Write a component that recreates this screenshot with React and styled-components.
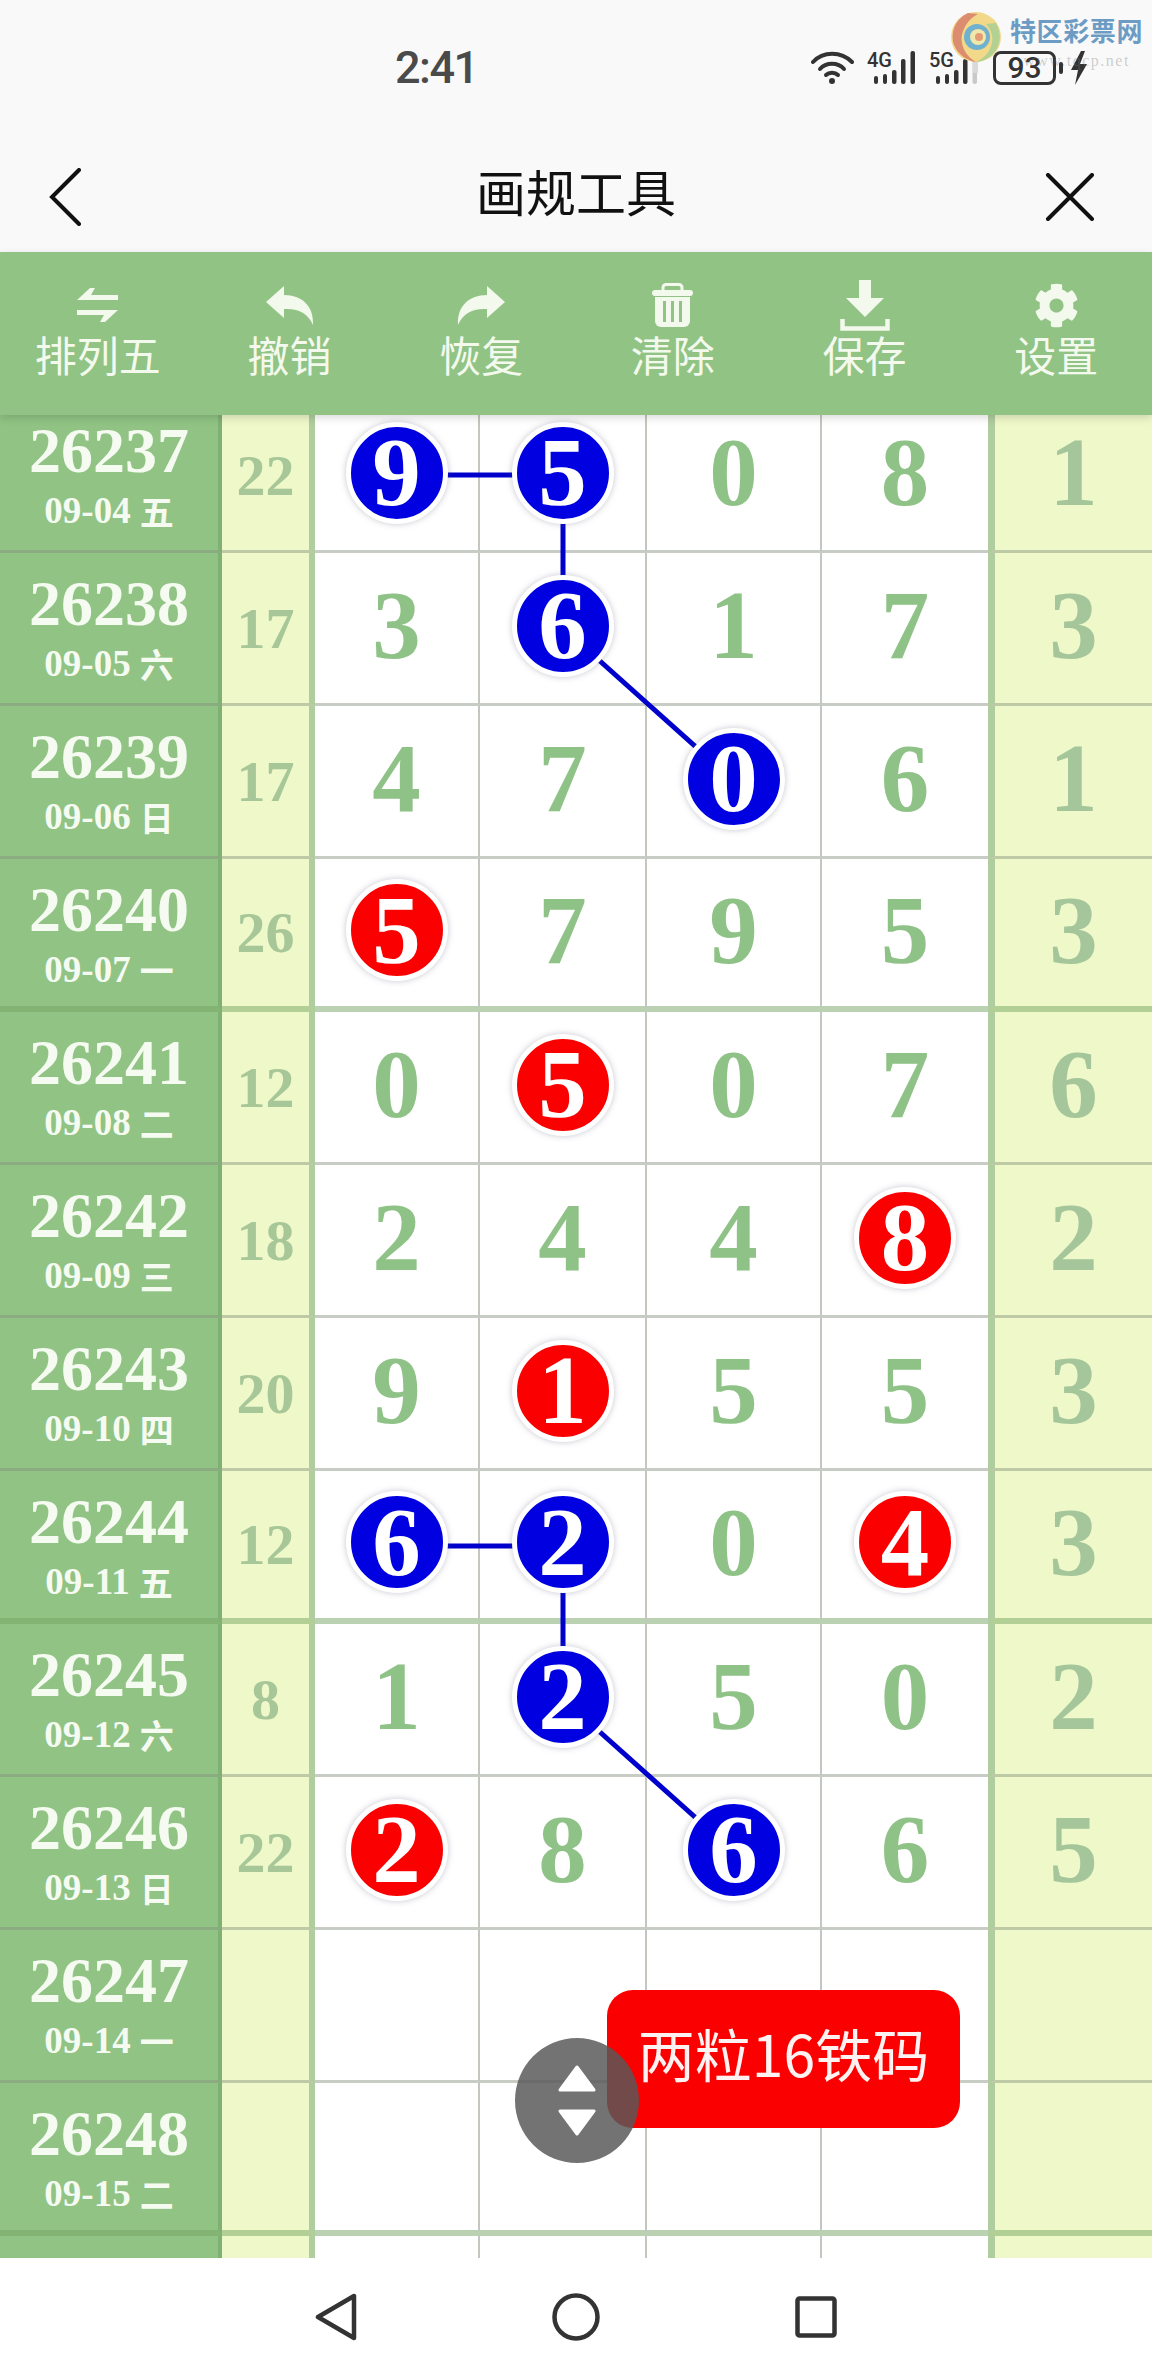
import React from 'react'
import styled, { createGlobalStyle } from 'styled-components'
import { FaCog } from 'react-icons/fa'

const GlobalStyle = createGlobalStyle`
  html, body {
    margin: 0;
    padding: 0;
    background: #ffffff;
  }
  * {
    box-sizing: border-box;
  }
`

const COLUMNS = [222, 93, 165, 167, 175, 166, 164]
const ROW_H = 153
const CJK = `"Noto Sans CJK SC", "Noto Sans", sans-serif`
const SERIF = `"Liberation Serif", "Noto Sans CJK SC", serif`

const Page = styled.div`
  position: relative;
  width: 1152px;
  height: 2376px;
  overflow: hidden;
  display: flex;
  flex-direction: column;
  background: #ffffff;
  font-family: ${CJK};
`

const StatusBar = styled.div`
  height: 100px;
  padding: 50px 64px 0 395px;
  display: flex;
  justify-content: space-between;
  align-items: flex-start;
  background: #f9f9f9;
`

const Time = styled.span`
  font-family: Roboto, sans-serif;
  font-size: 45px;
  font-weight: 500;
  line-height: 36px;
  color: #4a4a4a;
  letter-spacing: -1.5px;
`

const StatusIcons = styled.div`
  display: flex;
  align-items: center;
  height: 35px;
  gap: 13px;
`

const SignalSvg = styled.svg`
  display: block;
  overflow: visible;
`

const SignalLabel = styled.text`
  font-family: Roboto, sans-serif;
  font-size: 20px;
  font-weight: 500;
  fill: #333333;
`

const Battery = styled.div`
  width: 63px;
  height: 34px;
  margin-left: 2px;
  border: 3px solid #333333;
  border-radius: 8px;
  display: flex;
  align-items: center;
  justify-content: center;
  font-family: Roboto, sans-serif;
  font-size: 30px;
  font-weight: 500;
  color: #333333;
`

const BatteryEnd = styled.div`
  display: flex;
  align-items: center;
  gap: 7px;
  margin-left: -10px;
`

const Nub = styled.span`
  width: 4px;
  height: 12px;
  background: #333333;
  border-radius: 2px;
`

const Watermark = styled.div`
  position: absolute;
  top: 11px;
  left: 950px;
  display: flex;
  align-items: flex-start;
  gap: 8px;
`

const WatermarkText = styled.div`
  display: flex;
  flex-direction: column;
  align-items: center;
  margin-top: 4px;
`

const WatermarkName = styled.span`
  font-size: 26px;
  font-weight: 700;
  line-height: 30px;
  letter-spacing: 0.6px;
  color: #6c9cc4;
`

const WatermarkUrl = styled.span`
  font-family: "Liberation Serif", serif;
  font-size: 16px;
  line-height: 16px;
  margin-top: 8px;
  letter-spacing: 1.5px;
  color: rgba(120, 120, 120, 0.35);
`

const TitleBar = styled.div`
  height: 152px;
  padding: 28px 57px 0;
  display: grid;
  grid-template-columns: 1fr auto 1fr;
  align-items: center;
  background: #f9f9f9;
`

const Title = styled.h1`
  margin: 0;
  font-size: 50px;
  font-weight: 400;
  line-height: 60px;
  color: #111111;
`

const BackIcon = styled.svg`
  display: block;
  margin: 14px 0 0 -8px;
`

const CloseIcon = styled.svg`
  display: block;
  margin-top: 14px;
  justify-self: end;
`

const Toolbar = styled.div`
  position: relative;
  z-index: 5;
  height: 163px;
  padding: 27px 0 0 2px;
  display: flex;
  background: #90c384;
  box-shadow: 0 3px 8px rgba(0, 0, 0, 0.14);
`

const ToolItem = styled.div`
  flex: 1;
  display: flex;
  flex-direction: column;
  align-items: center;
  color: #f3f9ec;
`

const ToolIcon = styled.div`
  height: 52px;
  display: flex;
  align-items: center;
  justify-content: center;
`

const ToolLabel = styled.span`
  margin-top: -3px;
  font-size: 42px;
  line-height: 52px;
`

const BoardClip = styled.div`
  height: 1843px;
  overflow: hidden;
`

const Board = styled.div`
  position: relative;
  margin-top: -15px;
`

const Links = styled.svg`
  position: absolute;
  top: 0;
  left: 0;
  z-index: 1;
  pointer-events: none;
`

const Row = styled.div`
  display: grid;
  grid-template-columns: ${COLUMNS.map((c) => `${c}px`).join(' ')};
  height: ${ROW_H}px;
`

const Cell = styled.div`
  position: relative;
  display: flex;
  align-items: center;
  justify-content: center;
  padding-bottom: 5px;
  border-bottom: ${(p) => (p.$thick ? '6px solid rgba(118, 166, 100, 0.5)' : '3px solid rgba(130, 145, 125, 0.45)')};
`

const DrawCell = styled(Cell)`
  flex-direction: column;
  justify-content: flex-start;
  padding: 24px 0 0;
  background: #90c384;
  border-right: 4px solid #80b174;
  color: #f6fbf2;
  font-family: ${SERIF};
  font-weight: 700;
`

const DrawNo = styled.div`
  font-size: 64px;
  line-height: 54px;
`

const DrawDate = styled.div`
  margin-top: 15px;
  display: flex;
  align-items: center;
  gap: 9px;
  font-size: 37px;
  line-height: 36px;
`

const WeekDay = styled.span`
  font-family: ${CJK};
  font-size: 34px;
`

const SumCell = styled(Cell)`
  padding-bottom: 0;
  background: #eef8c9;
  border-right: 6px solid #b0cd9f;
  font-family: ${SERIF};
  font-size: 58px;
  font-weight: 700;
  color: #a8c798;
`

const NumCell = styled(Cell)`
  background: #ffffff;
  border-right: ${(p) => (p.$last ? '0' : '2px solid #c2c7bf')};
  font-family: ${SERIF};
  font-size: 97px;
  font-weight: 700;
  color: #8fc286;
`

const TailCell = styled(Cell)`
  background: #eef8c9;
  border-left: 7px solid #b0cd9f;
  font-family: ${SERIF};
  font-size: 97px;
  font-weight: 700;
  color: #a5c69a;
`

const Ball = styled.div`
  position: relative;
  z-index: 2;
  width: 102px;
  height: 102px;
  border: 5px solid #ffffff;
  border-radius: 50%;
  display: flex;
  align-items: center;
  justify-content: center;
  background: ${(p) => (p.$tone === 'b' ? '#0000e0' : '#fa0000')};
  box-shadow: 0 0 6px rgba(90, 90, 120, 0.35);
  color: #ffffff;
  line-height: 1;
`

const RedTag = styled.div`
  position: absolute;
  z-index: 6;
  left: 607px;
  top: 1990px;
  width: 353px;
  height: 138px;
  padding-bottom: 14px;
  border-radius: 26px;
  display: flex;
  align-items: center;
  justify-content: center;
  background: #fb0000;
  color: #fdf1f1;
  font-size: 57px;
`

const Scroller = styled.div`
  position: absolute;
  z-index: 7;
  left: 515px;
  top: 2038px;
  width: 124px;
  height: 125px;
  border-radius: 50%;
  display: flex;
  flex-direction: column;
  align-items: center;
  justify-content: center;
  gap: 17px;
  background: rgba(88, 88, 88, 0.84);
`

const NavBar = styled.div`
  flex: 1;
  display: flex;
  align-items: center;
  justify-content: center;
  gap: 195px;
  background: #ffffff;
`

const rows = [
  { no: '26237', date: '09-04', day: '五', sum: '22', nums: ['9b', '5b', '0', '8'], tail: '1' },
  { no: '26238', date: '09-05', day: '六', sum: '17', nums: ['3', '6b', '1', '7'], tail: '3' },
  { no: '26239', date: '09-06', day: '日', sum: '17', nums: ['4', '7', '0b', '6'], tail: '1' },
  { no: '26240', date: '09-07', day: '一', sum: '26', nums: ['5r', '7', '9', '5'], tail: '3', thick: true },
  { no: '26241', date: '09-08', day: '二', sum: '12', nums: ['0', '5r', '0', '7'], tail: '6' },
  { no: '26242', date: '09-09', day: '三', sum: '18', nums: ['2', '4', '4', '8r'], tail: '2' },
  { no: '26243', date: '09-10', day: '四', sum: '20', nums: ['9', '1r', '5', '5'], tail: '3' },
  { no: '26244', date: '09-11', day: '五', sum: '12', nums: ['6b', '2b', '0', '4r'], tail: '3', thick: true },
  { no: '26245', date: '09-12', day: '六', sum: '8', nums: ['1', '2b', '5', '0'], tail: '2' },
  { no: '26246', date: '09-13', day: '日', sum: '22', nums: ['2r', '8', '6b', '6'], tail: '5' },
  { no: '26247', date: '09-14', day: '一', sum: '', nums: ['', '', '', ''], tail: '' },
  { no: '26248', date: '09-15', day: '二', sum: '', nums: ['', '', '', ''], tail: '', thick: true },
  { no: '', date: '', day: '', sum: '', nums: ['', '', '', ''], tail: '' },
]

// [row, col] of the blue balls that get joined up
const links = [
  [[0, 0], [0, 1]],
  [[0, 1], [1, 1]],
  [[1, 1], [2, 2]],
  [[7, 0], [7, 1]],
  [[7, 1], [8, 1]],
  [[8, 1], [9, 2]],
]

const colCenters = [396, 563, 734, 905]

const SwapIcon = () => (
  <svg width="41" height="34" viewBox="0 0 41 34" fill="currentColor">
    <polygon points="0,12 13,0 18,0 14,7 41,7 41,12" />
    <polygon points="0,22 41,22 28,34 23,34 27,27 0,27" />
  </svg>
)

const ReplyIcon = ({ flip }) => (
  <svg width="48" height="39" viewBox="0 0 48 39" fill="currentColor" style={flip ? { transform: 'scaleX(-1)' } : undefined}>
    <path d="M0 16 L18 0 V9 C36 9 48 20 47 39 C42 27 32 22 18 23 V32 Z" />
  </svg>
)

const TrashIcon = () => (
  <svg width="41" height="44" viewBox="0 0 41 44" fill="currentColor">
    <rect x="11" y="1.5" width="19" height="8" rx="3" fill="none" stroke="currentColor" strokeWidth="3" />
    <rect x="0" y="7" width="41" height="6" rx="3" />
    <path d="M3 14 H38 V38 a6 6 0 0 1 -6 6 H9 a6 6 0 0 1 -6 -6 Z" />
    <rect x="11" y="18" width="3" height="21" fill="#90c384" />
    <rect x="19" y="18" width="3" height="21" fill="#90c384" />
    <rect x="27" y="18" width="3" height="21" fill="#90c384" />
  </svg>
)

const SaveIcon = () => (
  <svg width="50" height="51" viewBox="0 0 50 51" fill="currentColor">
    <rect x="19" y="0" width="12" height="18" />
    <polygon points="6,18 44,18 25,37" />
    <path d="M2.5 39 V48.5 H47.5 V39" fill="none" stroke="currentColor" strokeWidth="4.5" />
  </svg>
)

const tools = [
  { label: '排列五', icon: <SwapIcon /> },
  { label: '撤销', icon: <ReplyIcon /> },
  { label: '恢复', icon: <ReplyIcon flip /> },
  { label: '清除', icon: <TrashIcon /> },
  { label: '保存', icon: <SaveIcon /> },
  { label: '设置', icon: <FaCog size={45} /> },
]

const Signal = ({ label, faded }) => (
  <SignalSvg width="49" height="35" viewBox="0 0 49 35">
    <SignalLabel x="0" y="17">{label}</SignalLabel>
    <rect x="7" y="26" width="4" height="8" rx="2" fill="#333" />
    <rect x="16" y="24" width="4" height="10" rx="2" fill="#333" />
    <rect x="25" y="20" width="4.5" height="14" rx="2" fill="#333" />
    <rect x="34" y="9" width="4.5" height="25" rx="2" fill="#333" />
    <rect x="43.5" y="1" width="4.5" height="33" rx="2" fill={faded ? '#c9c9c9' : '#333'} />
  </SignalSvg>
)

const Lollipop = () => (
  <svg width="52" height="62" viewBox="0 0 52 62" fill="none">
    <rect x="23" y="44" width="5" height="18" fill="#d9d9d9" />
    <circle cx="26" cy="26" r="25" fill="#f2d98a" />
    <path d="M18 2 C5 8 0 22 4 34 C8 44 18 50 26 51 C14 44 8 30 14 18 C17 11 22 6 28 3 Z" fill="#dd8d6f" />
    <path d="M46 12 C52 22 51 36 42 44 C36 49 30 51 26 51 C38 46 44 34 42 24 C41 19 38 15 36 13 Z" fill="#b2d192" />
    <circle cx="27" cy="26" r="13" fill="#6fb1cf" />
    <circle cx="28" cy="26" r="8" fill="#f0e7a8" />
    <circle cx="29" cy="26" r="4" fill="#e39a75" />
  </svg>
)

export default function App() {
  return (
    <Page>
      <GlobalStyle />
      <StatusBar>
        <Time>2:41</Time>
        <StatusIcons>
          <svg width="43" height="34" viewBox="0 0 43 34" fill="none" stroke="#333" strokeWidth="4" strokeLinecap="round">
            <path d="M2 11 C12 0 30 0 41 11" />
            <path d="M9 18 C15 11 27 11 33 18" />
            <path d="M15 24 C18 21 24 21 27 24" />
            <circle cx="21" cy="30" r="3" fill="#333" stroke="none" />
          </svg>
          <Signal label="4G" />
          <Signal label="5G" faded />
          <Battery>93</Battery>
          <BatteryEnd>
            <Nub />
            <svg width="18" height="34" viewBox="0 0 18 34" fill="#333">
              <polygon points="11,0 1,19 8,19 5,34 17,13 10,13 15,0" />
            </svg>
          </BatteryEnd>
        </StatusIcons>
      </StatusBar>

      <Watermark>
        <Lollipop />
        <WatermarkText>
          <WatermarkName>特区彩票网</WatermarkName>
          <WatermarkUrl>www.tqcp.net</WatermarkUrl>
        </WatermarkText>
      </Watermark>

      <TitleBar>
        <BackIcon width="32" height="58" viewBox="0 0 32 58" fill="none" stroke="#111" strokeWidth="4" strokeLinecap="round">
          <path d="M30 2 L3 29 L30 56" />
        </BackIcon>
        <Title>画规工具</Title>
        <CloseIcon width="50" height="48" viewBox="0 0 50 48" fill="none" stroke="#111" strokeWidth="4" strokeLinecap="round">
          <path d="M3 2 L47 46 M47 2 L3 46" />
        </CloseIcon>
      </TitleBar>

      <Toolbar>
        {tools.map((t) => (
          <ToolItem key={t.label}>
            <ToolIcon>{t.icon}</ToolIcon>
            <ToolLabel>{t.label}</ToolLabel>
          </ToolItem>
        ))}
      </Toolbar>

      <BoardClip>
        <Board>
          <Links width="1152" height={rows.length * ROW_H}>
            {links.map(([a, b]) => (
              <line
                key={`${a}-${b}`}
                x1={colCenters[a[1]]}
                y1={a[0] * ROW_H + 75}
                x2={colCenters[b[1]]}
                y2={b[0] * ROW_H + 75}
                stroke="#0000cc"
                strokeWidth="5"
              />
            ))}
          </Links>
          {rows.map((r, i) => (
            <Row key={i}>
              <DrawCell $thick={r.thick}>
                <DrawNo>{r.no}</DrawNo>
                <DrawDate>
                  {r.date}
                  <WeekDay>{r.day}</WeekDay>
                </DrawDate>
              </DrawCell>
              <SumCell $thick={r.thick}>{r.sum}</SumCell>
              {r.nums.map((n, j) => (
                <NumCell key={j} $thick={r.thick} $last={j === 3}>
                  {n.length > 1 ? <Ball $tone={n[1]}>{n[0]}</Ball> : n}
                </NumCell>
              ))}
              <TailCell $thick={r.thick}>{r.tail}</TailCell>
            </Row>
          ))}
        </Board>
      </BoardClip>

      <RedTag>两粒16铁码</RedTag>
      <Scroller>
        <svg width="38" height="27" viewBox="0 0 38 27" fill="#fff">
          <path d="M19 2 L36 25 H2 Z" stroke="#fff" strokeWidth="3" strokeLinejoin="round" />
        </svg>
        <svg width="38" height="27" viewBox="0 0 38 27" fill="#fff">
          <path d="M19 25 L36 2 H2 Z" stroke="#fff" strokeWidth="3" strokeLinejoin="round" />
        </svg>
      </Scroller>

      <NavBar>
        <svg width="42" height="48" viewBox="0 0 42 48" fill="none" stroke="#333" strokeWidth="4.5" strokeLinejoin="round">
          <path d="M39 3 V45 L3 24 Z" />
        </svg>
        <svg width="48" height="48" viewBox="0 0 48 48" fill="none" stroke="#333" strokeWidth="4.5">
          <circle cx="24" cy="24" r="21.5" />
        </svg>
        <svg width="42" height="42" viewBox="0 0 42 42" fill="none" stroke="#333" strokeWidth="4.5" strokeLinejoin="round">
          <rect x="2.5" y="2.5" width="37" height="37" rx="2" />
        </svg>
      </NavBar>
    </Page>
  )
}
